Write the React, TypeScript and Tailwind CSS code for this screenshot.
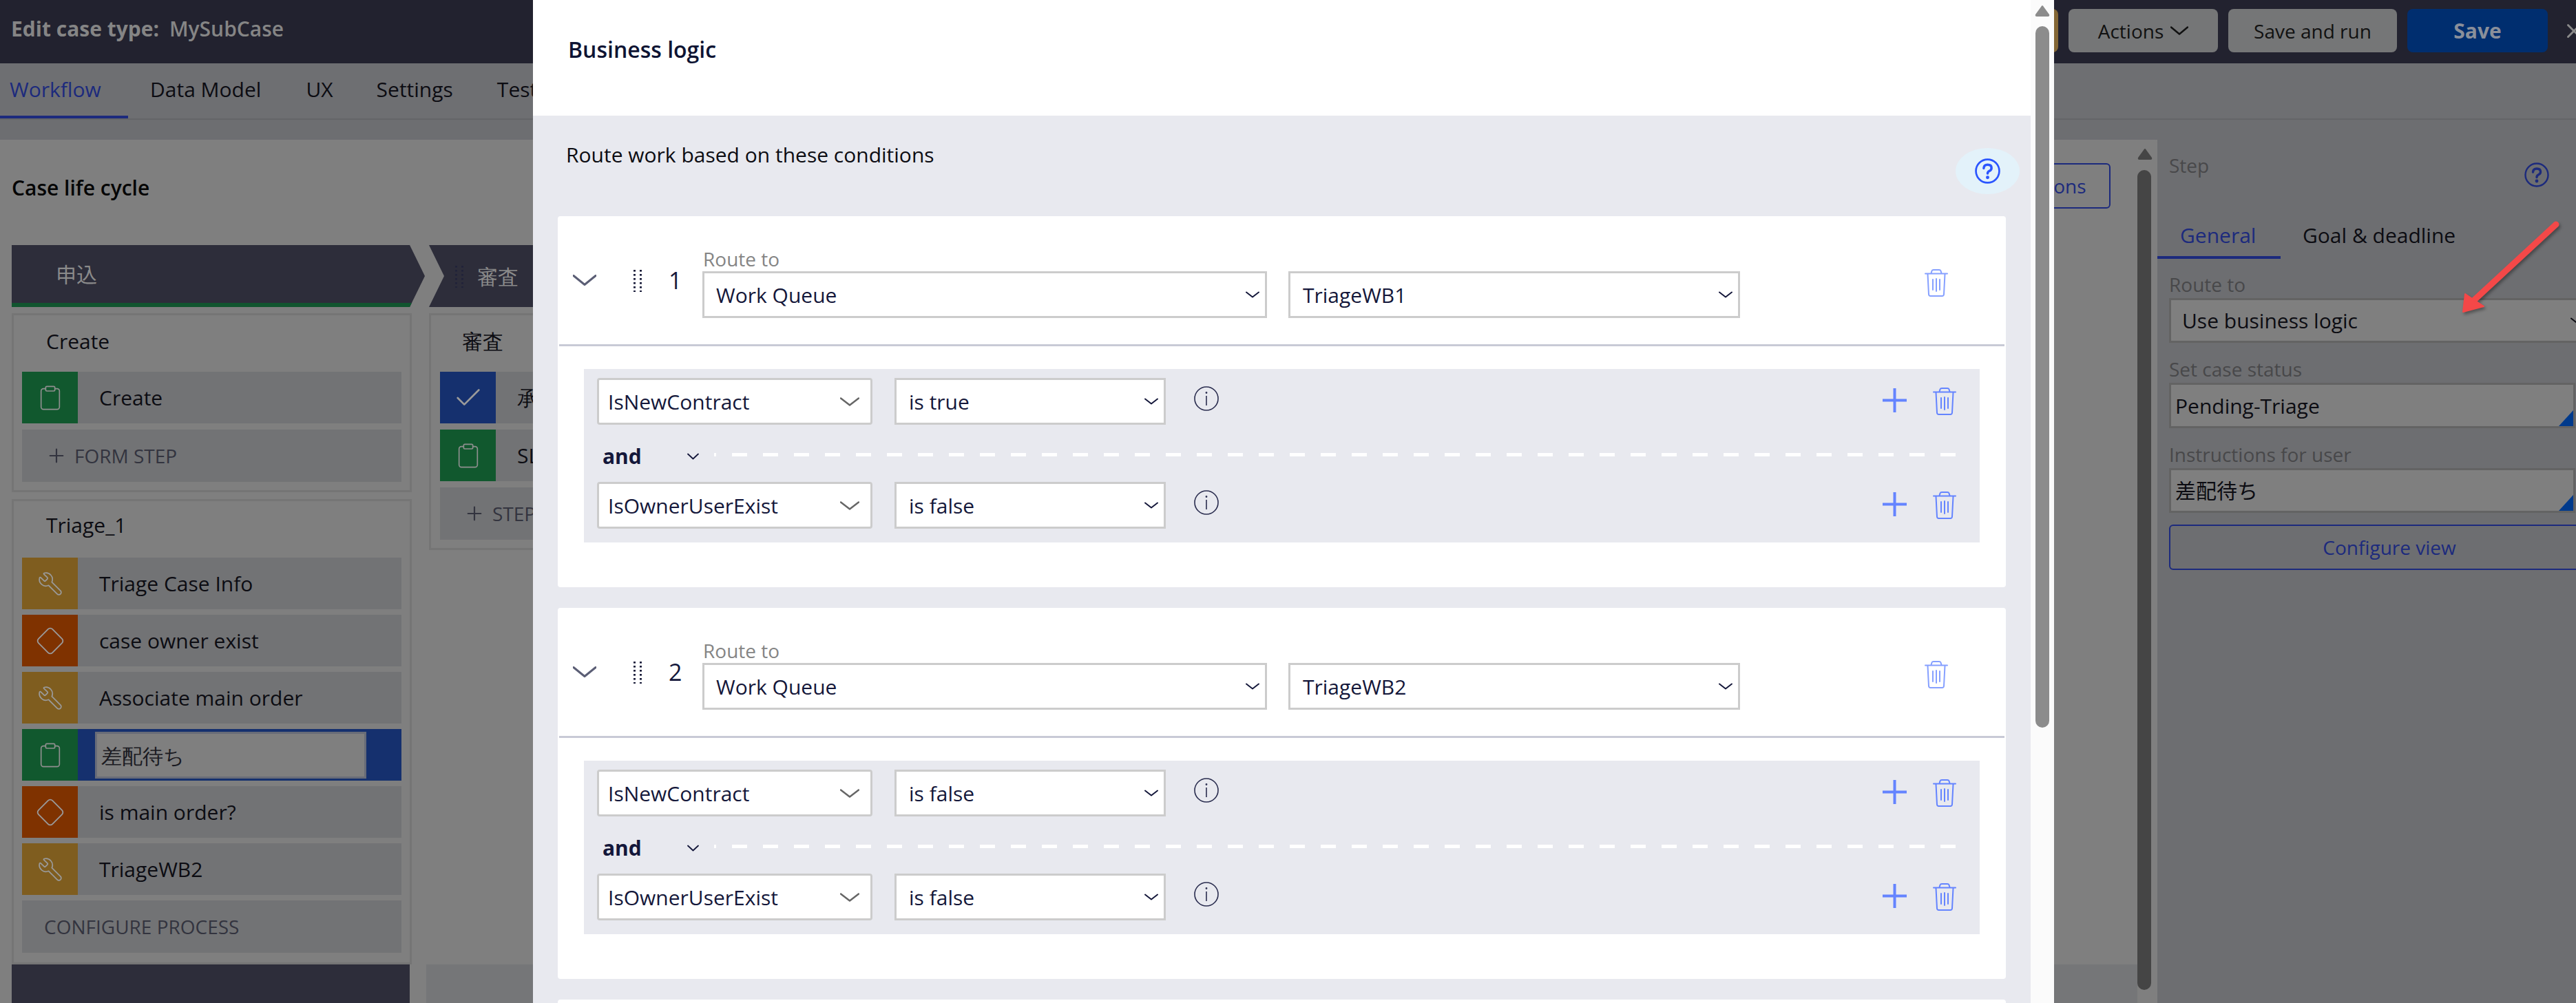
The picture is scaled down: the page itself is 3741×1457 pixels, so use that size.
import React from "react";
import { Wrench, Diamond, Clipboard, Check, Plus, X, ChevronDown } from "lucide-react";

function Chev({ w = 34, h = 16, color = "#5b5e75", sw = 3 }: { w?: number; h?: number; color?: string; sw?: number }) {
  return (
    <svg width={w} height={h} viewBox={`0 0 ${w} ${h}`} className="shrink-0">
      <polyline points={`1,1.5 ${w / 2},${h - 1.5} ${w - 1},1.5`} fill="none" stroke={color} strokeWidth={sw} strokeLinecap="round" strokeLinejoin="round" />
    </svg>
  );
}

function Trash({ color = "#6484ff", w = 34, h = 40 }: { color?: string; w?: number; h?: number }) {
  return (
    <svg width={w} height={h} viewBox="0 0 34 40" fill="none" stroke={color} strokeWidth="2" strokeLinecap="round" strokeLinejoin="round" className="shrink-0">
      <path d="M9.5 6 L10.5 2.5 Q11 1 13 1 H21 Q23 1 23.5 2.5 L24.5 6" />
      <path d="M1 6.5 H33" />
      <path d="M4.5 7 L6 36.5 Q6.2 39 8.5 39 H25.5 Q27.8 39 28 36.5 L29.5 7" />
      <path d="M12 15 V30 M17 14 V32 M22 15 V30" />
    </svg>
  );
}

function Info() {
  return (
    <svg width="36" height="36" viewBox="0 0 36 36" fill="none" stroke="#2a2d4f" strokeWidth="1.6" className="shrink-0">
      <circle cx="18" cy="18" r="17" />
      <path d="M18 14 V28" />
      <circle cx="18" cy="9.5" r="0.6" />
    </svg>
  );
}

function Help({ color, size, sw }: { color: string; size: number; sw: number }) {
  return (
    <svg width={size} height={size} viewBox="0 0 36 36" fill="none" className="shrink-0">
      <circle cx="18" cy="18" r="16.5" stroke={color} strokeWidth={sw} />
      <path d="M12.5 14 Q12.8 9 18 9 Q23.5 9 23.5 13.5 Q23.5 16.5 20.5 17.8 Q18 19 18 21.5" stroke={color} strokeWidth="3.4" strokeLinecap="round" />
      <circle cx="18" cy="27" r="2.4" fill={color} />
    </svg>
  );
}

function Dots() {
  const ys = [1, 7, 13, 19, 25, 31];
  return (
    <svg width="12" height="33" viewBox="0 0 12 33" className="shrink-0">
      {ys.map((y) => (
        <g key={y}>
          <rect x="0" y={y} width="3" height="2.6" fill="#1a1d3a" />
          <rect x="9" y={y} width="3" height="2.6" fill="#1a1d3a" />
        </g>
      ))}
    </svg>
  );
}

function ScrollArrow({ color }: { color: string }) {
  return (
    <svg width="22" height="18" viewBox="0 0 22 18" className="shrink-0">
      <path d="M11 1 Q12 1 13 3 L21 14 Q22 17 19 17 H3 Q0 17 1 14 L9 3 Q10 1 11 1 Z" fill={color} />
    </svg>
  );
}

function Step({ color, icon, label, active }: { color: string; icon: React.ReactNode; label: string; active?: boolean }) {
  return (
    <div className={`flex h-[75px] ${active ? "bg-[#15306e]" : "bg-[#727375]"}`}>
      <div className={`flex w-[81px] shrink-0 items-center justify-center ${color}`}>{icon}</div>
      {active ? (
        <div className="ml-[25px] mt-[4px] flex h-[68px] w-[394px] items-center border-[3px] border-[#686c78] bg-[#7f7f7f] pl-[6px] text-[30px] text-[#1b1b22]">{label}</div>
      ) : (
        <div className="flex items-center whitespace-nowrap pl-[31px] text-[30px] text-[#0c0c12]">{label}</div>
      )}
    </div>
  );
}

const wrench = <Wrench size={38} strokeWidth={1.1} color="#9a9a9a" className="-scale-x-100" />;
const diamond = <Diamond size={44} strokeWidth={1} color="#9a9a9a" />;
const clip = <Clipboard size={40} strokeWidth={1} color="#8f8f8f" />;

function Cond({ a, b }: { a: string; b: string }) {
  return (
    <div className="flex h-[68px] items-center pl-[19px] pr-[34px]">
      <div className="flex h-[68px] w-[400px] items-center justify-between rounded-[4px] border-[3px] border-[#cccccc] bg-white pl-[13px] pr-[16px] text-[30px] text-[#14173a]">
        {a}
        <Chev w={28} h={13} color="#666666" sw={2.5} />
      </div>
      <div className="ml-[32px] flex h-[68px] w-[394px] items-center justify-between border-[3px] border-[#cccccc] bg-white pl-[18px] pr-[8px] text-[30px] text-[#14173a]">
        {b}
        <Chev w={20} h={10} color="#14173a" sw={2} />
      </div>
      <div className="ml-[41px] -mt-[8px]">
        <Info />
      </div>
      <div className="ml-auto flex items-center gap-[38px]">
        <svg width="35" height="35" viewBox="0 0 35 35" className="-mt-[3px]">
          <path d="M17.5 0 V35 M0 17.5 H35" stroke="#6484ff" strokeWidth="4" />
        </svg>
        <Trash />
      </div>
    </div>
  );
}

function Card({ n, q }: { n: string; q: string }) {
  return (
    <div className="mx-[36px] mb-[30px] h-[539px] shrink-0 rounded-[4px] bg-white">
      <div className="flex h-[186px] items-center">
        <div className="ml-[22px]">
          <Chev w={34} h={16} />
        </div>
        <div className="ml-[54px]">
          <Dots />
        </div>
        <div className="ml-[39px] w-[49px] text-[34px] font-medium leading-none text-[#14173a]">{n}</div>
        <div className="mt-[6px] flex items-end gap-[31px]">
          <div className="flex w-[820px] flex-col">
            <div className="h-[36px] pl-[1px] text-[28px] leading-[36px] text-[#858585]">Route to</div>
            <div className="flex h-[68px] items-center justify-between border-[3px] border-[#cccccc] pl-[17px] pr-[8px] text-[30px] text-[#14173a]">
              Work Queue
              <Chev w={20} h={10} color="#14173a" sw={2} />
            </div>
          </div>
          <div className="flex h-[68px] w-[656px] items-center justify-between border-[3px] border-[#cccccc] pl-[18px] pr-[8px] text-[30px] text-[#14173a]">
            {q}
            <Chev w={20} h={10} color="#14173a" sw={2} />
          </div>
        </div>
        <div className="ml-[268px] mt-[8px]">
          <Trash color="#86a0ff" />
        </div>
      </div>
      <div className="mx-[2px] h-[3px] bg-[#c8cad6]" />
      <div className="mx-[38px] mt-[33px] h-[252px] bg-[#e8e9ef] pt-[13px]">
        <Cond a="IsNewContract" b={n === "1" ? "is true" : "is false"} />
        <div className="flex h-[83px] items-center pl-[27px] pr-[35px] pt-[8px]">
          <div className="w-[123px] text-[30px] font-bold text-[#14173a]">and</div>
          <Chev w={17} h={10} color="#14173a" sw={1.8} />
          <div className="ml-[22px] h-[5px] flex-1 -translate-y-[2px] bg-[repeating-linear-gradient(90deg,#fff_0,#fff_3px,transparent_3px,transparent_26px,#fff_26px,#fff_45px)]" />
        </div>
        <Cond a="IsOwnerUserExist" b="is false" />
      </div>
    </div>
  );
}

export default function App() {
  return (
    <div className="relative flex h-[1457px] w-[3741px] flex-col overflow-hidden bg-[#7f7f7f] font-['Open_Sans',sans-serif]">
      {/* header */}
      <header className="flex h-[92px] shrink-0 items-center justify-between bg-[#22222f] pl-[16px]">
        <div className="-mt-[10px] whitespace-nowrap text-[30px] font-bold text-[#858585]">
          Edit case type: <span className="ml-[7px] font-semibold">MySubCase</span>
        </div>
        <div className="flex items-center gap-[15px] pb-[3px]">
          <div className="flex h-[63px] w-[200px] items-center justify-end rounded-[8px] bg-[#846735] pr-[16px] text-[28px] text-[#111]">Tutorial</div>
          <div className="flex h-[63px] w-[217px] items-center justify-center gap-[10px] rounded-[8px] bg-[#757677] text-[28px] text-[#111]">
            Actions
            <Chev w={26} h={13} color="#111" sw={2.5} />
          </div>
          <div className="flex h-[63px] w-[245px] items-center justify-center rounded-[8px] bg-[#757677] text-[28px] text-[#111]">Save and run</div>
          <div className="flex h-[63px] w-[204px] items-center justify-center rounded-[8px] bg-[#002e6f] text-[30px] font-bold text-[#8a8f9a]">Save</div>
          <div className="w-[26px] overflow-hidden pl-[6px]">
            <X size={34} strokeWidth={2} color="#8a8a8a" />
          </div>
        </div>
      </header>

      {/* tabs */}
      <nav className="flex h-[82px] shrink-0 border-b-[2px] border-[#646568] bg-[#6e6f72] text-[30px]">
        <div className="flex h-[80px] w-[186px] items-start justify-start border-b-[4px] border-[#1c2a7d] pl-[14px] pt-[15px] text-[#1c2a7d]">Workflow</div>
        <div className="ml-[32px] pt-[15px] text-[#0c0c12]">Data Model</div>
        <div className="ml-[65px] pt-[15px] text-[#0c0c12]">UX</div>
        <div className="ml-[63px] pt-[15px] text-[#0c0c12]">Settings</div>
        <div className="ml-[64px] pt-[15px] text-[#0c0c12]">Test</div>
      </nav>
      <div className="h-[29px] shrink-0 bg-[#6d6e71]" />

      {/* main */}
      <div className="flex min-h-0 flex-1">
        {/* canvas */}
        <main className="flex w-[3133px] shrink-0 overflow-hidden rounded-tr-[4px] bg-[#7f7f7f]">
          <div className="flex min-w-0 flex-1 flex-col overflow-hidden pl-[17px]">
            <div className="flex h-[100px] shrink-0 items-start justify-between pr-[39px] pt-[34px]">
              <div className="mt-[15px] text-[30px] font-semibold leading-[42px] text-[#050505]">Case life cycle</div>
              <div className="flex h-[66px] w-[300px] items-center justify-center rounded-[6px] border-[2px] border-[#1c2a7d] text-[28px] text-[#1c2a7d]">
                <span className="ml-[16px] whitespace-nowrap">Optional actions</span>
              </div>
            </div>
            <div className="mt-[53px] flex h-[1045px] shrink-0 gap-[25px]">
              <section className="flex w-[581px] shrink-0 flex-col">
                <div className="flex h-[90px] w-[600px] shrink-0 items-center border-b-[6px] border-[#11552f] bg-[#2d2d3a] pl-[64px] text-[30px] text-[#8a8a8a] [clip-path:polygon(0_0,578px_0,600px_45px,578px_100%,0_100%)] font-['Open_Sans','Noto_Sans_CJK_JP',sans-serif]">
                  申込
                </div>
                <div className="mt-[9px] flex h-[260px] flex-col border-[3px] border-[#757575] px-[12px]">
                  <div className="flex h-[68px] items-center pl-[35px] pt-[6px] text-[30px] text-[#0c0c12]">Create</div>
                  <div className="mt-[14px] flex flex-col gap-[9px]">
                    <Step color="bg-[#11582e]" icon={clip} label="Create" />
                    <div className="flex h-[76px] items-center gap-[10px] bg-[#727375] pl-[34px] text-[28px] text-[#33343f]">
                      <Plus size={32} strokeWidth={1.6} color="#33343f" />
                      FORM STEP
                    </div>
                  </div>
                </div>
                <div className="mt-[10px] flex h-[676px] flex-col border-[3px] border-[#757575] px-[12px]">
                  <div className="flex h-[68px] items-center pl-[35px] text-[30px] text-[#0c0c12]">Triage_1</div>
                  <div className="mt-[14px] flex flex-col gap-[8px]">
                    <Step color="bg-[#7f5d1f]" icon={wrench} label="Triage Case Info" />
                    <Step color="bg-[#7f3200]" icon={diamond} label="case owner exist" />
                    <Step color="bg-[#7f5d1f]" icon={wrench} label="Associate main order" />
                    <Step color="bg-[#11582e]" icon={clip} label="差配待ち" active />
                    <Step color="bg-[#7f3200]" icon={diamond} label="is main order?" />
                    <Step color="bg-[#7f5d1f]" icon={wrench} label="TriageWB2" />
                    <div className="flex h-[76px] items-center bg-[#727375] pl-[32px] text-[28px] text-[#33343f]">CONFIGURE PROCESS</div>
                  </div>
                </div>
              </section>
              <section className="flex w-[581px] shrink-0 flex-col">
                <div className="flex h-[90px] items-center gap-[20px] bg-[#2d2d3a] pl-[38px] text-[30px] text-[#8a8a8a] [clip-path:polygon(0_0,100%_0,100%_100%,0_100%,22px_45px)]">
                  <div className="opacity-60">
                    <Dots />
                  </div>
                  審査
                </div>
                <div className="mt-[9px] flex h-[344px] flex-col border-[3px] border-[#757575] pl-[13px]">
                  <div className="flex h-[68px] items-center pl-[32px] pt-[6px] text-[30px] text-[#0c0c12]">審査</div>
                  <div className="mt-[14px] flex flex-col gap-[9px]">
                    <Step color="bg-[#15306e]" icon={<Check size={46} strokeWidth={1.4} color="#9a9a9a" />} label="承認" />
                    <Step color="bg-[#11582e]" icon={clip} label="SLA" />
                    <div className="flex h-[76px] items-center gap-[10px] bg-[#727375] pl-[34px] text-[28px] text-[#33343f]">
                      <Plus size={32} strokeWidth={1.6} color="#33343f" />
                      STEP
                    </div>
                  </div>
                </div>
              </section>
            </div>
            <div className="mt-[0px] flex flex-1 gap-[24px]">
              <div className="w-[578px] shrink-0 bg-[#2d2d3a]" />
              <div className="flex-1 bg-[#757678]" />
            </div>
          </div>
          <div className="flex w-[29px] shrink-0 flex-col items-start pt-[12px]">
            <ScrollArrow color="#454545" />
            <div className="mt-[14px] h-[1191px] w-[20px] rounded-full bg-[#454545]" />
          </div>
        </main>

        {/* right panel */}
        <aside className="flex min-w-0 flex-1 flex-col overflow-hidden bg-[#6d6e71]">
          <div className="flex h-[97px] shrink-0 items-start justify-between pl-[17px] pr-[39px]">
            <div className="pt-[19px] text-[28px] leading-[36px] text-[#48484a]">Step</div>
            <div className="pt-[33px]">
              <Help color="#1c2a7d" size={36} sw={2.4} />
            </div>
          </div>
          <div className="flex h-[76px] shrink-0">
            <div className="h-[76px] w-[179px] border-b-[4px] border-[#1c2a7d] pl-[33px] pt-[22px] text-[30px] leading-[40px] text-[#1c2a7d]">General</div>
            <div className="pl-[32px] pt-[22px] text-[30px] leading-[40px] text-[#0c0c12]">Goal &amp; deadline</div>
          </div>
          <div className="flex flex-col pl-[17px] pt-[19px] text-[#0c0c12]">
            <div className="h-[38px] text-[28px] leading-[36px] text-[#48484a]">Route to</div>
            <div className="flex h-[65px] w-[620px] items-center justify-between border-[3px] border-[#636363] bg-[#7f7f7f] pl-[16px] pr-[14px] text-[30px]">
              Use business logic
              <Chev w={20} h={10} color="#0c0c12" sw={2} />
            </div>
            <div className="mt-[20px] h-[38px] text-[28px] leading-[36px] text-[#48484a]">Set case status</div>
            <div className="relative flex h-[66px] w-[590px] items-center border-[3px] border-[#636363] bg-[#7f7f7f] pl-[6px] text-[30px]">
              Pending-Triage
              <div className="absolute bottom-0 right-0 h-[23px] w-[21px] bg-[#003a8c] [clip-path:polygon(100%_0,100%_100%,0_100%)]" />
            </div>
            <div className="mt-[20px] h-[38px] text-[28px] leading-[36px] text-[#48484a]">Instructions for user</div>
            <div className="relative flex h-[65px] w-[590px] items-center border-[3px] border-[#636363] bg-[#7f7f7f] pl-[6px] text-[30px] font-['Open_Sans','Noto_Sans_CJK_JP',sans-serif]">
              差配待ち
              <div className="absolute bottom-0 right-0 h-[23px] w-[21px] bg-[#003a8c] [clip-path:polygon(100%_0,100%_100%,0_100%)]" />
            </div>
            <div className="mt-[17px] flex h-[66px] w-[640px] items-center justify-center rounded-[6px] border-[2px] border-[#1c2a7d] text-[28px] text-[#1c2a7d]">Configure view</div>
          </div>
        </aside>
      </div>

      {/* modal */}
      <div className="absolute left-[774px] top-0 flex h-[1457px] w-[2209px] bg-[#fbfbfb]">
        <div className="flex w-[2175px] flex-col overflow-hidden">
          <div className="h-[168px] shrink-0 bg-white pl-[51px] pt-[50px] text-[32px] font-semibold leading-[44px] text-[#0e1433]">Business logic</div>
          <div className="flex min-h-0 flex-1 flex-col bg-[#e8e9ef]">
            <div className="flex h-[146px] shrink-0 items-start justify-between pl-[48px] pr-[16px]">
              <div className="pt-[38px] text-[30px] leading-[38px] text-[#0c0c12]">Route work based on these conditions</div>
              <div className="mt-[47px] flex h-[67px] w-[93px] items-center justify-center rounded-[50%] bg-[#e3f2fa]">
                <Help color="#2b55ff" size={37} sw={2.6} />
              </div>
            </div>
            <Card n="1" q="TriageWB1" />
            <Card n="2" q="TriageWB2" />
            <div className="mx-[36px] h-[200px] shrink-0 rounded-[4px] bg-white" />
          </div>
        </div>
        <div className="flex w-[34px] shrink-0 flex-col items-center pt-[7px]">
          <ScrollArrow color="#8c8c8c" />
          <div className="mt-[13px] h-[1019px] w-[20px] rounded-full bg-[#8c8c8c]" />
        </div>
      </div>

      {/* annotation arrow */}
      <svg className="absolute left-[3560px] top-[310px] drop-shadow-[2px_3px_2px_rgba(0,0,0,0.35)]" width="170" height="160" viewBox="3560 310 170 160">
        <path d="M3712 326 L3593 436" stroke="#f44848" strokeWidth="9" strokeLinecap="round" fill="none" />
        <polygon points="3577,453 3580,427 3607,445" fill="#f44848" stroke="#f44848" strokeWidth="2" strokeLinejoin="round" />
      </svg>
    </div>
  );
}
